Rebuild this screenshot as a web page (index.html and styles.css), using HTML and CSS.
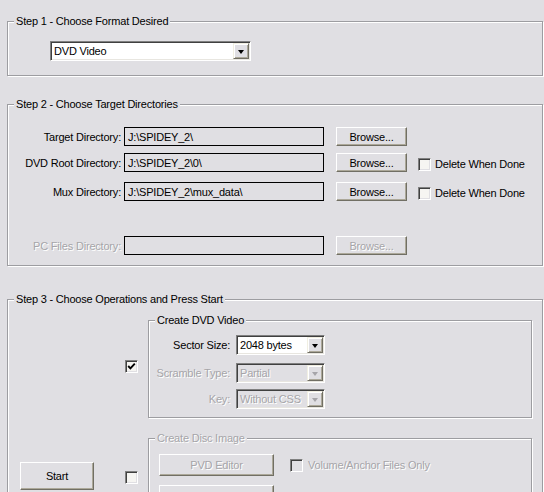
FILE: index.html
```html
<!DOCTYPE html>
<html>
<head>
<meta charset="utf-8">
<link rel="stylesheet" href="styles.css">
</head>
<body>
<div class="page">
  <fieldset class="group g1">
    <legend>Step 1 - Choose Format Desired</legend>
    <div class="g1-body">
      <div class="combo combo-format"><span class="combo-text">DVD Video</span><span class="combo-btn"><span class="arrow"></span></span></div>
    </div>
  </fieldset>

  <fieldset class="group g2">
    <legend>Step 2 - Choose Target Directories</legend>
    <div class="dir-rows">
      <div class="dir-row r1">
        <span class="dir-label">Target Directory:</span>
        <div class="edit">J:\SPIDEY_2\</div>
        <div class="btn browse">Browse...</div>
      </div>
      <div class="dir-row r2">
        <span class="dir-label">DVD Root Directory:</span>
        <div class="edit">J:\SPIDEY_2\0\</div>
        <div class="btn browse">Browse...</div>
        <span class="check"></span>
        <span class="check-text">Delete When Done</span>
      </div>
      <div class="dir-row r3">
        <span class="dir-label">Mux Directory:</span>
        <div class="edit">J:\SPIDEY_2\mux_data\</div>
        <div class="btn browse">Browse...</div>
        <span class="check"></span>
        <span class="check-text">Delete When Done</span>
      </div>
      <div class="dir-row r4">
        <span class="dir-label disabled">PC Files Directory:</span>
        <div class="edit"></div>
        <div class="btn browse disabled">Browse...</div>
      </div>
    </div>
  </fieldset>

  <fieldset class="group g3">
    <legend>Step 3 - Choose Operations and Press Start</legend>
    <div class="ops">
      <div class="ops-spacer"></div>
      <span class="check checked op-check-a"><svg width="9" height="9" viewBox="0 0 9 9"><polyline points="1.2,4 3.4,6.3 7.8,1.6" fill="none" stroke="#000" stroke-width="1.9"/></svg></span>
      <fieldset class="group sub dvd">
        <legend>Create DVD Video</legend>
        <div class="field-rows">
          <div class="field-row">
            <span class="field-label">Sector Size:</span>
            <div class="combo combo-small"><span class="combo-text">2048 bytes</span><span class="combo-btn"><span class="arrow"></span></span></div>
          </div>
          <div class="field-row fr2">
            <span class="field-label disabled">Scramble Type:</span>
            <div class="combo combo-small off"><span class="combo-text">Partial</span><span class="combo-btn"><span class="arrow"></span></span></div>
          </div>
          <div class="field-row fr3">
            <span class="field-label disabled">Key:</span>
            <div class="combo combo-small off"><span class="combo-text">Without CSS</span><span class="combo-btn"><span class="arrow"></span></span></div>
          </div>
        </div>
      </fieldset>

      <div class="start-cell"><div class="btn start">Start</div></div>
      <span class="check op-check-b"></span>
      <fieldset class="group sub disc">
        <legend class="disabled">Create Disc Image</legend>
        <div class="disc-body">
          <div class="disc-row">
            <div class="btn wide disabled">PVD Editor</div>
            <span class="check off"></span>
            <span class="check-text disabled">Volume/Anchor Files Only</span>
          </div>
          <div class="disc-row dr2">
            <div class="btn wide disabled"></div>
          </div>
        </div>
      </fieldset>
    </div>
  </fieldset>
</div>
</body>
</html>
```

FILE: styles.css
```css
html, body {
  margin: 0;
  padding: 0;
  background: #e0dfe3;
  overflow: hidden;
}
body {
  width: 544px;
  height: 492px;
  font-family: "Liberation Sans", Arial, sans-serif;
  font-size: 11px;
  letter-spacing: -0.2px;
  color: #000;
}
.page {
  padding-left: 7px;
  width: 536px;
}
.group {
  margin: 0;
  padding: 0;
  min-width: 0;
  border: 1px solid #9d9da1;
  box-shadow: 1px 1px 0 #fff, inset 1px 1px 0 #fff;
}
.group > legend {
  margin-left: 6px;
  padding: 0 2px;
  line-height: 13px;
  background: #e0dfe3;
}
.disabled {
  color: #a6a5a9;
  text-shadow: 1px 1px 0 #fff;
}

/* Group 1 */
.g1 { margin-top: 15px; }
.g1-body {
  padding: 13px 0 14px 42px;
}

/* Combo box */
.combo {
  box-sizing: border-box;
  display: flex;
  height: 20px;
  background: #fff;
  border: 1px solid;
  border-color: #808080 #fff #fff #808080;
  box-shadow: inset 1px 1px 0 #404040, inset -1px -1px 0 #e8e6e0;
  padding: 1px;
}
.combo-format { width: 201px; }
.combo-text {
  flex: 1;
  display: flex;
  align-items: center;
  padding-left: 2px;
  white-space: nowrap;
  overflow: hidden;
}
.combo-btn {
  box-sizing: border-box;
  width: 16px;
  height: 16px;
  background: #e0dfe3;
  border: 1px solid;
  border-color: #f1efe2 #716f64 #716f64 #f1efe2;
  box-shadow: inset 1px 1px 0 #fff, inset -1px -1px 0 #aca899;
  display: flex;
  align-items: center;
  justify-content: center;
}
.arrow {
  width: 0;
  height: 0;
  border-left: 3.5px solid transparent;
  border-right: 3.5px solid transparent;
  border-top: 4px solid #000;
  margin-top: 1px;
}
.combo.off { background: #e0dfe3; }
.combo.off .combo-text { color: #a6a5a9; text-shadow: 1px 1px 0 #fff; }
.combo.off .arrow { border-top-color: #a6a5a9; }

/* Group 2 */
.g2 { margin-top: 22px; }
.dir-rows {
  padding: 16px 0 10px 0;
}
.dir-row {
  display: flex;
  height: 19px;
  align-items: stretch;
}
.r2 { margin-top: 7px; }
.r3 { margin-top: 10px; }
.r4 { margin-top: 35px; }
.dir-label {
  width: 113px;
  margin-right: 3px;
  display: flex;
  align-items: center;
  justify-content: flex-end;
  white-space: nowrap;
}
.edit {
  box-sizing: border-box;
  width: 200px;
  border: 1px solid #000;
  padding-left: 3px;
  display: flex;
  align-items: center;
  white-space: nowrap;
  margin-right: 12px;
}
.btn {
  box-sizing: border-box;
  display: flex;
  align-items: center;
  justify-content: center;
  background: #e0dfe3;
  border: 1px solid;
  border-color: #fff #716f64 #716f64 #fff;
  box-shadow: inset -1px -1px 0 #aca899;
  white-space: nowrap;
}
.browse {
  width: 71px;
  margin-right: 11px;
}
.check {
  box-sizing: border-box;
  width: 13px;
  height: 13px;
  flex: none;
  background: #f6f5f2;
  border: 1px solid;
  border-color: #808080 #fff #fff #808080;
  box-shadow: inset 1px 1px 0 #404040, inset -1px -1px 0 #e0dfe3;
  display: flex;
  align-items: center;
  justify-content: center;
}
.check.off { background: #e0dfe3; }
.dir-row .check {
  align-self: flex-start;
  margin-top: 5px;
  margin-right: 4px;
}
.check-text {
  display: flex;
  align-items: center;
  white-space: nowrap;
}
.dir-row .check-text { margin-top: 3px; }

/* Group 3 */
.g3 {
  margin-top: 27px;
  height: 220px;
}
.ops {
  display: grid;
  grid-template-columns: 117px 23px 384px;
  grid-template-rows: auto auto;
  row-gap: 14px;
  padding-top: 8px;
}
.op-check-a {
  align-self: center;
  margin-top: 1px;
}
.op-check-b {
  align-self: start;
  margin-top: 39px;
}
.start-cell {
  padding: 30px 0 0 12px;
}
.start {
  width: 74px;
  height: 28px;
}
.sub { box-sizing: border-box; width: 384px; }
.field-rows {
  padding: 8px 0 8px 0;
}
.field-row {
  display: flex;
  height: 20px;
}
.fr2 { margin-top: 8px; }
.fr3 { margin-top: 6px; }
.field-label {
  width: 81px;
  margin-right: 6px;
  display: flex;
  align-items: center;
  justify-content: flex-end;
  white-space: nowrap;
}
.combo-small { width: 89px; }

.disc-body {
  padding: 9px 0 0 10px;
}
.disc-row {
  display: flex;
  align-items: center;
}
.dr2 { margin-top: 9px; }
.wide {
  width: 115px;
  height: 22px;
}
.disc-row .check {
  margin-left: 16px;
  margin-right: 5px;
}
```
